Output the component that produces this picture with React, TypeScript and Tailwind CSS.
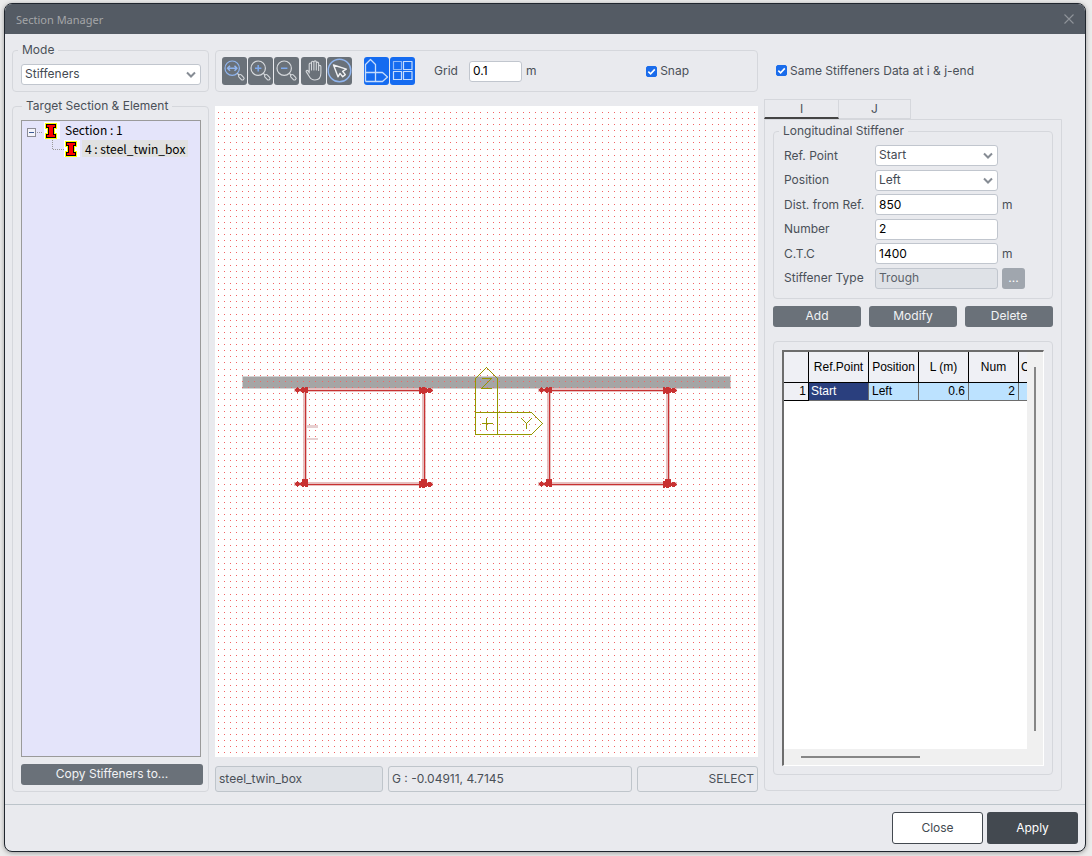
import React, { useState } from "react";

// Snaps grid line n to a whole pixel: lines lie 6px apart, with one more pixel at about every ninth.
function snapLine(start: number, n: number, first: number, run: number) {
  const before = Math.min(run, Math.floor((n - first) / 9) + 1);
  const after = Math.max(0, Math.floor((n - first - 1) / 9) - run);
  return start + 6 * n + before + after;
}

function gridPath(cols: number, rows: number) {
  let d = "";
  for (let r = 0; r < rows; r++) {
    const y = snapLine(6, r, 6, 6);
    for (let c = 0; c < cols; c++) {
      d += `M${snapLine(3, c, 8, 5)} ${y}h1v1h-1z`;
    }
  }
  return d;
}

const DOTS = gridPath(320, 200);

function Group({ title, className, children }: { title: string; className: string; children: React.ReactNode }) {
  return (
    <fieldset className={`min-w-0 rounded border border-[#d5d7dc] ${className}`}>
      <legend className="px-1 leading-4">{title}</legend>
      {children}
    </fieldset>
  );
}

function Select({ id, label, options, className }: { id: string; label?: string; options: string[]; className: string }) {
  return (
    <div className={`relative ${className}`}>
      <select
        id={id}
        aria-label={label}
        className="block h-[21px] w-full appearance-none rounded-[3px] border border-[#c1c6ce] bg-white pr-5 pb-px pl-[3px] text-[#444a52] outline-none"
      >
        {options.map((o) => (
          <option key={o}>{o}</option>
        ))}
      </select>
      <svg className="pointer-events-none absolute top-[7px] right-[5px]" width="10" height="8" viewBox="0 0 10 8" fill="none" stroke="#868c94" strokeWidth="2">
        <path d="M1 1.5L5 5.5L9 1.5" />
      </svg>
    </div>
  );
}

function Check({ id, label }: { id: string; label: string }) {
  const [on, setOn] = useState(true);
  return (
    <label htmlFor={id} className="flex items-center gap-[3px]">
      <span className="relative block size-[11px]">
        <input
          id={id}
          type="checkbox"
          checked={on}
          onChange={() => setOn(!on)}
          className="block size-[11px] appearance-none rounded-[2px] border border-[#1a6ceb] bg-white checked:bg-[#1a6ceb]"
        />
        <svg className="pointer-events-none absolute inset-0" width="11" height="11" viewBox="0 0 11 11" fill="none" stroke="#fff" strokeWidth="1.6">
          <path d="M2.3 5.6L4.6 7.8L8.8 3.4" />
        </svg>
      </span>
      {label}
    </label>
  );
}

function Tool({ label, active, children }: { label: string; active?: boolean; children: React.ReactNode }) {
  return (
    <button
      type="button"
      aria-label={label}
      className={`flex h-7 w-[25px] items-center justify-center rounded-[3px] ${active ? "bg-[#156bf0]" : "bg-[#6a7179]"}`}
    >
      <svg width="25" height="28" viewBox="0 0 25 28" fill="none" strokeLinejoin="round">
        {children}
      </svg>
    </button>
  );
}

function Lens({ ring, children }: { ring: string; children: React.ReactNode }) {
  return (
    <>
      <circle cx="10.2" cy="11.2" r="7.2" stroke={ring} strokeWidth="1.2" />
      <path d="M15.4 16.4L17 18" stroke="#d5d8dc" strokeWidth="1.2" />
      <rect x="-1.6" y="-3.2" width="3.2" height="6.4" rx="1.5" transform="translate(19.3 20.2) rotate(-45)" stroke="#d5d8dc" strokeWidth="1.1" />
      {children}
    </>
  );
}

function BeamIcon() {
  return (
    <svg width="16" height="17" viewBox="0 0 16 17" className="shrink-0" shapeRendering="crispEdges">
      <rect width="16" height="17" fill="#fff" />
      <path d="M1 1h12v6h-2v4h2v6H1v-6h2V7H1z" fill="#ff0" />
      <path d="M2 2h10v4h-2v6h2v4H2v-4h2V6H2z" fill="#000" />
      <path d="M3 3h8v2H9v8h2v2H3v-2h2V5H3z" fill="#f00" />
    </svg>
  );
}

function Girder({ x }: { x: number }) {
  return (
    <g transform={`translate(${x} 284)`}>
      <g fill="#e4b9b9" fillOpacity="0.9">
        <path d="M-11 -2h139v4h-139z" />
        <path d="M-11 92h139v4h-139z" />
        <path d="M-2 2h4v90h-4z" />
        <path d="M117 2h4v90h-4z" />
      </g>
      <g fill="#c83232">
        <path d="M-8 0h134v1H-8z" />
        <path d="M-8 94h134v1H-8z" />
        <path d="M0 0h1v94H0z" />
        <path d="M119 0h1v94h-1z" />
        {[0, 94].map((y) => (
          <g key={y} transform={`translate(0 ${y})`}>
            <path d="M-11 0l3-3l3 2l2-2h1l1 1l1-1h3v6h-3l-1-1l-1 1h-1l-2-2l-3 2z" />
            <path d="M114-3h2v1h1v-1h3v1h1l1 1l1-1h2l3 2v1l-3 2h-2l-1-1l-1 1h-1v1h-3v-1h-1v1h-2z" />
          </g>
        ))}
        <path d="M-3 89h6v2l-1 2h-4l-1-2z" />
        <path d="M116 89h6v2l-1 2h-4l-1-2z" />
      </g>
    </g>
  );
}

function SectionView() {
  return (
    <div className="relative min-h-0 flex-1 overflow-hidden bg-white">
      <svg className="absolute inset-0 size-full" shapeRendering="crispEdges">
        <rect x="27" y="270" width="489" height="13" fill="#d3d3d3" />
        <rect x="28" y="271" width="487" height="11" fill="#a5a5a5" />
        <path d={DOTS} fill="#f26464" />
        <path d="M92 319h11v3H92zM92 332h11v2H92z" fill="#e6cfd0" />
        <Girder x={90} />
        <Girder x={334} />
        <g fill="none" stroke="#969600" transform="translate(.5 .5)">
          <path d="M260 328V272L271 261L282 272V328" />
          <path d="M260 306H316L327 317L316 328H260" />
          <path d="M266 317H277M271 311V323" />
          <path d="M266 272H276L266 282H276" />
          <path d="M306 312L311 317L316 312M311 317V322" />
        </g>
      </svg>
    </div>
  );
}

function Field({ id, label, children }: { id: string; label: string; children: React.ReactNode }) {
  return (
    <div className="flex h-[21px] items-center">
      <label htmlFor={id} className="w-[91px] shrink-0">
        {label}
      </label>
      {children}
    </div>
  );
}

const inputClass =
  "h-[21px] rounded-[3px] border border-[#c1c6ce] bg-white pb-px pl-[3px] text-black outline-none read-only:bg-[#dfe2e7] read-only:text-[#5c636b]";
const grayButton = "h-[21px] rounded-[3px] bg-[#6a7179] pb-px leading-5 text-[#f2f3f5]";
const headCell = "border-r border-b border-black bg-[#eff0f5] p-0 font-normal";
const bodyCell = "border-r border-b border-[#6d6d6d] bg-[#bce2ff] px-[3px] py-0";

export default function App() {
  return (
    <div className="flex min-h-screen bg-[#ececec] pt-[3px] pr-[6px] pb-1 pl-1 font-['Inter','Liberation_Sans',sans-serif] text-xs text-[#4a5058]">
      <div className="flex flex-1 flex-col overflow-hidden rounded-[8px] border border-[#20262e] bg-[#e9eaee] shadow-[0_1px_5px_rgba(0,0,0,0.35)]">
        <header className="flex h-[30px] shrink-0 items-center justify-between bg-[#545b64] pr-[11px] pl-[11px] text-[#a4a6a8]">
          <h1 className="pt-[2px] font-['Noto_Sans',sans-serif] text-[11px]">Section Manager</h1>
          <button type="button" aria-label="Close window">
            <svg width="10" height="10" viewBox="0 0 10 10" stroke="#8e9399" strokeWidth="1.1">
              <path d="M.5 .5L9.5 9.5M9.5 .5L.5 9.5" />
            </svg>
          </button>
        </header>

        <main className="flex min-h-0 flex-1 gap-[6px] pt-2 pr-[23px] pb-3 pl-[7px]">
          <aside className="flex w-[197px] shrink-0 flex-col gap-[6px]">
            <Group title="Mode" className="px-[5px] pb-[6px]">
              <Select id="mode" label="Mode" options={["Stiffeners", "Section"]} className="mt-[6px] ml-[3px] w-[180px]" />
            </Group>
            <Group title="Target Section & Element" className="flex flex-1 flex-col px-[9px] pb-[6px]">
              <div className="flex h-full flex-col gap-[7px] pt-[6px]">
                <ul className="-ml-px w-[180px] flex-1 border border-[#9a9a9a] bg-[#e4e4fa] font-['Noto_Sans_CJK_KR',sans-serif] text-black">
                  <li className="flex h-[18px] items-center pl-1">
                    <svg width="18" height="17" viewBox="0 0 18 17" shapeRendering="crispEdges">
                      <rect x="1.5" y="6.5" width="8" height="8" fill="#f4f4fa" stroke="#8c8c96" />
                      <path d="M3 10.5h5" stroke="#3c5a96" />
                      <path d="M11 10.5h6" stroke="#999" strokeDasharray="1 1" />
                    </svg>
                    <BeamIcon />
                    <span className="pl-[5px]">Section : 1</span>
                  </li>
                  <li className="flex h-[18px] items-center pl-6">
                    <svg width="18" height="17" viewBox="0 0 18 17" fill="none" shapeRendering="crispEdges">
                      <path d="M6.5 0V9.5H18" stroke="#999" strokeDasharray="1 1" />
                    </svg>
                    <BeamIcon />
                    <span className="ml-[2px] bg-[#e1e1e1] px-[3px] leading-[17px] whitespace-nowrap">4 : steel_twin_box</span>
                  </li>
                </ul>
                <button type="button" className={`${grayButton} -ml-px w-[182px] shrink-0`}>
                  Copy Stiffeners to...
                </button>
              </div>
            </Group>
          </aside>

          <section className="flex min-w-0 flex-1 flex-col">
            <div className="mt-2 flex h-[42px] shrink-0 items-center rounded border border-[#d5d7dc] pl-[6px]">
              <div className="flex gap-px">
                <Tool label="Zoom fit">
                  <Lens ring="#8fb4ee">
                    <path d="M5.5 11.2H15M8 8.7L5.5 11.2L8 13.7M12.5 8.7L15 11.2L12.5 13.7" stroke="#8fb4ee" strokeWidth="1.5" />
                  </Lens>
                </Tool>
                <Tool label="Zoom in">
                  <Lens ring="#d5d8dc">
                    <path d="M7 11.2H13.4M10.2 8V14.4" stroke="#7ea9ec" strokeWidth="1.5" />
                  </Lens>
                </Tool>
                <Tool label="Zoom out">
                  <Lens ring="#d5d8dc">
                    <path d="M7 11.2H13.4" stroke="#7ea9ec" strokeWidth="1.5" />
                  </Lens>
                </Tool>
              </div>
              <div className="ml-[2px] flex gap-px">
                <Tool label="Pan">
                  <path
                    d="M8.2 16.5V7.2C8.2 5.6 10.5 5.6 10.5 7.2V13V5.4C10.5 3.8 12.9 3.8 12.9 5.4V13V5C12.9 3.5 15.3 3.5 15.3 5V13V6.2C15.3 4.7 17.6 4.7 17.6 6.2V13.5V9.4C17.6 8 19.9 8 19.9 9.4V16C19.9 20.4 18 23 13.8 23C10.8 23 9.4 21.5 8.3 19.5L5.2 14.6C4.8 13.4 6.3 12.9 7 13.8L8.2 15.3"
                    stroke="#d5d8dc"
                    strokeWidth="1.1"
                  />
                </Tool>
                <Tool label="Select">
                  <circle cx="12.5" cy="13.5" r="11.3" stroke="#8fb4ee" strokeWidth="1.4" />
                  <path d="M6.5 8L19.3 12.2L15.6 14.3L18.3 17.6L15.7 19.8L13 16.4L11 19.8Z" stroke="#f0f1f3" strokeWidth="1.4" />
                </Tool>
              </div>
              <div className="ml-3 flex gap-px">
                <Tool label="Show axes" active>
                  <path d="M1.5 24.5V7.5L6.5 2.5L11.5 7.5V24.5M1.5 15.5H18.5L23.5 20L18.5 24.5H1.5" stroke="#c6dcfc" strokeWidth="1.3" />
                </Tool>
                <Tool label="Show grid" active>
                  <rect x="3.5" y="4.5" width="8" height="8" stroke="#8fb8f8" strokeWidth="1.2" />
                  <path d="M13.5 4.5h8.5v8h-8.5zM3.5 14.5h8v8h-8zM13.5 14.5h8.5v8h-8.5z" stroke="#c6dcfc" strokeWidth="1.2" />
                </Tool>
              </div>
              <label htmlFor="grid" className="ml-[19px] w-[35px]">
                Grid
              </label>
              <input id="grid" defaultValue="0.1" className={`${inputClass} w-[53px]`} />
              <span className="ml-1">m</span>
              <div className="mr-[68px] ml-auto">
                <Check id="snap" label="Snap" />
              </div>
            </div>
            <div className="mt-[14px] flex min-h-0 flex-1 flex-col">
              <SectionView />
            </div>
            <div className="mt-[9px] flex h-[26px] shrink-0 gap-[5px] leading-[23px]">
              <output className="w-[168px] rounded-[3px] border border-[#bfc5cb] bg-[#dfe2e7] px-[3px]">steel_twin_box</output>
              <output className="flex-1 rounded-[3px] border border-[#bfc5cb] px-[3px]">G : -0.04911, 4.7145</output>
              <output className="w-[121px] rounded-[3px] border border-[#bfc5cb] px-[3px] text-right">SELECT</output>
            </div>
          </section>

          <section className="mb-px flex w-[298px] shrink-0 flex-col">
            <div className="flex h-[57px] shrink-0 items-center pl-3">
              <Check id="same" label="Same Stiffeners Data at i & j-end" />
            </div>
            <div role="tablist" className="flex h-5 shrink-0 text-center">
              <button type="button" role="tab" aria-selected="true" className="w-[75px] border border-b-2 border-[#d5d7dc] border-b-[#444]">
                I
              </button>
              <button type="button" role="tab" aria-selected="false" className="w-[72px] border border-l-0 border-[#d5d7dc]">
                J
              </button>
            </div>
            <div className="flex flex-1 flex-col rounded-b border border-[#d5d7dc] px-2 pt-[3px] pb-[15px]">
              <Group title="Longitudinal Stiffener" className="px-[5px] pb-[9px]">
                <div className="mt-[6px] flex h-36 flex-col justify-between pl-[5px]">
                  <Field id="ref" label="Ref. Point">
                    <Select id="ref" options={["Start", "End"]} className="w-[123px]" />
                  </Field>
                  <Field id="pos" label="Position">
                    <Select id="pos" options={["Left", "Right"]} className="w-[123px]" />
                  </Field>
                  <Field id="dist" label="Dist. from Ref.">
                    <input id="dist" defaultValue="850" className={`${inputClass} w-[123px]`} />
                    <span className="ml-1">m</span>
                  </Field>
                  <Field id="num" label="Number">
                    <input id="num" defaultValue="2" className={`${inputClass} w-[123px]`} />
                  </Field>
                  <Field id="ctc" label="C.T.C">
                    <input id="ctc" defaultValue="1400" className={`${inputClass} w-[123px]`} />
                    <span className="ml-1">m</span>
                  </Field>
                  <Field id="type" label="Stiffener Type">
                    <input id="type" readOnly value="Trough" className={`${inputClass} w-[123px]`} />
                    <button type="button" aria-label="Choose stiffener type" className="ml-1 h-[21px] w-[23px] rounded-[3px] bg-[#a0a6ae] text-white">
                      ...
                    </button>
                  </Field>
                </div>
              </Group>
              <div className="mt-[7px] grid grid-cols-3 gap-2">
                <button type="button" className={grayButton}>Add</button>
                <button type="button" className={grayButton}>Modify</button>
                <button type="button" className={grayButton}>Delete</button>
              </div>
              <div className="mt-[14px] flex flex-1 rounded border border-[#d5d7dc] p-2">
                <div className="grid flex-1 grid-cols-[minmax(0,1fr)_16px] grid-rows-[minmax(0,1fr)_16px] border-t-2 border-r border-b border-l-2 border-t-[#6d6d6d] border-r-white border-b-white border-l-[#6d6d6d] bg-[#f0f0f0]">
                  <div className="overflow-hidden bg-white">
                    <table className="w-[285px] table-fixed border-separate border-spacing-0 font-['Liberation_Sans',sans-serif] text-xs text-black">
                      <colgroup>
                        <col className="w-[25px]" />
                        <col className="w-[60px]" />
                        <col className="w-[50px]" />
                        <col className="w-[50px]" />
                        <col className="w-[50px]" />
                        <col />
                      </colgroup>
                      <thead>
                        <tr className="h-[31px]">
                          <th className={headCell} aria-label="Row" />
                          <th className={headCell}>Ref.Point</th>
                          <th className={headCell}>Position</th>
                          <th className={headCell}>L (m)</th>
                          <th className={headCell}>Num</th>
                          <th className={`${headCell} pl-[2px] text-left`}>C.T.C</th>
                        </tr>
                      </thead>
                      <tbody>
                        <tr className="h-[18px] leading-[17px]">
                          <th className="border-r border-b border-black bg-[#eff0f5] p-0 pr-[2px] text-right font-normal">1</th>
                          <td className="border-r border-b border-[#6d6d6d] bg-[#2a3f7e] px-[2px] py-0 text-white">Start</td>
                          <td className={bodyCell}>Left</td>
                          <td className={`${bodyCell} text-right`}>0.6</td>
                          <td className={`${bodyCell} text-right`}>2</td>
                          <td className={bodyCell} />
                        </tr>
                      </tbody>
                    </table>
                  </div>
                  <div className="flex justify-center pt-[15px] pb-[18px]">
                    <div className="w-[2px] bg-[#868686]" />
                  </div>
                  <div className="flex items-center pl-[17px]">
                    <div className="h-[2px] w-[119px] bg-[#868686]" />
                  </div>
                </div>
              </div>
            </div>
          </section>
        </main>

        <footer className="flex h-[47px] shrink-0 items-center justify-end gap-1 border-t border-[#bcc4ca] pr-[7px]">
          <button type="button" className="h-8 w-[91px] rounded-[3px] border border-[#434950] bg-white text-[#434950]">
            Close
          </button>
          <button type="button" className="h-8 w-[91px] rounded-[3px] bg-[#434950] text-white">
            Apply
          </button>
        </footer>
      </div>
    </div>
  );
}
